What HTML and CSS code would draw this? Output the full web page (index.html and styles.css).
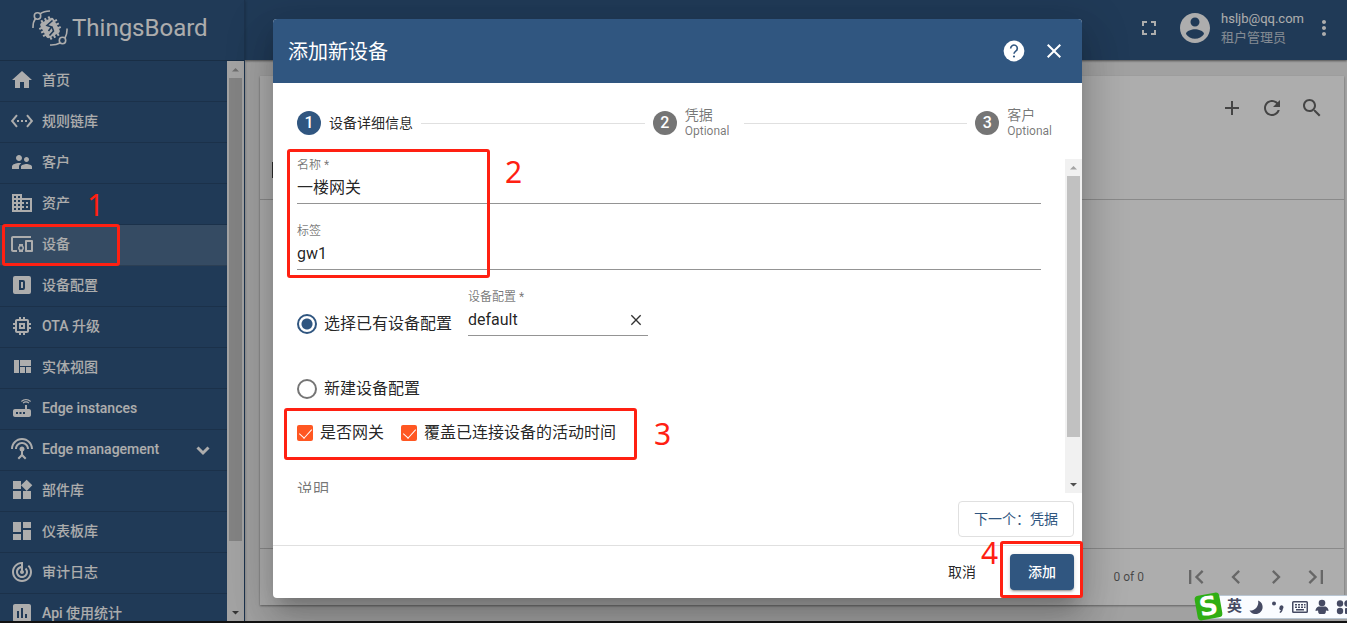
FILE: index.html
```html
<!DOCTYPE html>
<html lang="zh-CN">
<head>
    <meta charset="UTF-8">
    <meta name="viewport" content="width=device-width, initial-scale=1.0">
    <title>ThingsBoard | 设备</title>
    <link rel="stylesheet" href="styles.css">
</head>
<body>
    <div class="app">
        <aside class="sidenav">
            <header class="brand">
                <svg class="brand-logo" viewBox="0 0 36 36" fill="none" stroke="#fff">
                    <g transform="rotate(-28 18 18)">
                        <path fill="#fff" stroke="none" d="M13 9.500h10q2.500 0 2.500 2.500v12q0 2.500-2.500 2.500H13q-2.500 0-2.500-2.500V12q0-2.500 2.500-2.500z"/>
                        <path stroke-width="2" d="M14 10V7M18 10V7M22 10V7M14 26v3M18 26v3M22 26v3M11 14H8M11 18H8M11 22H8M25 14h3M25 18h3M25 22h3"/>
                    </g>
                    <path stroke="#305680" stroke-width="1.600" d="M20.500 10.500l-5.500 5 4.500 1.500-3 4M20 17l1.500 4-4 4.500"/>
                    <circle cx="5.500" cy="6" r="3.200" stroke-width="1.600"/>
                    <path stroke-width="1.600" d="M8 4Q12 1 18 1M3.500 8.500Q.8 12 1 18"/>
                    <circle cx="30.500" cy="30.500" r="3.200" stroke-width="1.600"/>
                    <path stroke-width="1.600" d="M28 33Q24 35.300 18 35M33 28Q35.300 24 35 18.500"/>
                </svg>
                <span class="brand-name">ThingsBoard</span>
            </header>
            <div class="sidenav-body">
                <nav class="menu">
                    <a class="menu-item" href="#"><svg class="icon" viewBox="0 0 24 24"><path d="M10 20v-6h4v6h5v-8h3L12 3 2 12h3v8z"/></svg>首页</a>
                    <a class="menu-item" href="#"><svg class="icon" viewBox="0 0 24 24"><path d="M7.77 6.76L6.23 5.48.82 12l5.41 6.52 1.54-1.28L3.42 12l4.35-5.24zM7 13h2v-2H7v2zm10-2h-2v2h2v-2zm-6 2h2v-2h-2v2zm6.770-7.520l-1.540 1.280L20.580 12l-4.350 5.240 1.540 1.280L23.180 12l-5.410-6.520z"/></svg>规则链库</a>
                    <a class="menu-item" href="#"><svg class="icon" viewBox="0 0 24 24"><path d="M16.5 12c1.38 0 2.49-1.12 2.49-2.5S17.88 7 16.5 7C15.12 7 14 8.12 14 9.5s1.12 2.5 2.5 2.5zM9 11c1.66 0 2.99-1.34 2.99-3S10.66 5 9 5C7.34 5 6 6.34 6 8s1.34 3 3 3zm7.5 3c-1.83 0-5.5.92-5.5 2.75V19h11v-2.25c0-1.83-3.67-2.75-5.5-2.75zM9 13c-2.33 0-7 1.17-7 3.5V19h7v-2.25c0-.85.33-2.34 2.37-3.47C10.5 13.1 9.66 13 9 13z"/></svg>客户</a>
                    <a class="menu-item" href="#"><svg class="icon" viewBox="0 0 24 24"><path d="M12 7V3H2v18h20V7H12zM6 19H4v-2h2v2zm0-4H4v-2h2v2zm0-4H4V9h2v2zm0-4H4V5h2v2zm4 12H8v-2h2v2zm0-4H8v-2h2v2zm0-4H8V9h2v2zm0-4H8V5h2v2zm10 12h-8v-2h2v-2h-2v-2h2v-2h-2V9h8v10zm-2-8h-2v2h2v-2zm0 4h-2v2h2v-2z"/></svg>资产</a>
                    <a class="menu-item active" href="#"><svg class="icon" viewBox="0 0 24 24"><path d="M3 6h18V4H3c-1.1 0-2 .9-2 2v12c0 1.1.9 2 2 2h4v-2H3V6zm10 6H9v1.78c-.61.55-1 1.33-1 2.22s.39 1.67 1 2.22V20h4v-1.78c.61-.55 1-1.34 1-2.22s-.39-1.67-1-2.22V12zm-2 5.5c-.83 0-1.5-.67-1.5-1.5s.67-1.5 1.5-1.5 1.5.67 1.5 1.5-.67 1.5-1.5 1.5zM22 8h-6c-.5 0-1 .5-1 1v10c0 .5.5 1 1 1h6c.5 0 1-.5 1-1V9c0-.5-.5-1-1-1zm-1 10h-4v-8h4v8z"/></svg>设备</a>
                    <a class="menu-item" href="#"><svg class="icon" viewBox="0 0 24 24"><path fill-rule="evenodd" d="M5 3h14a2 2 0 0 1 2 2v14a2 2 0 0 1-2 2H5a2 2 0 0 1-2-2V5a2 2 0 0 1 2-2zM9 7v10h4a2 2 0 0 0 2-2V9a2 2 0 0 0-2-2H9zm2 2h2v6h-2V9z"/></svg>设备配置</a>
                    <a class="menu-item" href="#"><svg class="icon" viewBox="0 0 24 24"><path d="M15 9H9v6h6V9zm-2 4h-2v-2h2v2zm8-2V9h-2V7c0-1.1-.9-2-2-2h-2V3h-2v2h-2V3H9v2H7c-1.1 0-2 .9-2 2v2H3v2h2v2H3v2h2v2c0 1.1.9 2 2 2h2v2h2v-2h2v2h2v-2h2c1.1 0 2-.9 2-2v-2h2v-2h-2v-2h2zm-4 6H7V7h10v10z"/></svg>OTA 升级</a>
                    <a class="menu-item" href="#"><svg class="icon" viewBox="0 0 24 24"><path d="M10 18h5v-6h-5v6zm-6 0h5V5H4v13zm12 0h5v-6h-5v6zM10 5v6h11V5H10z"/></svg>实体视图</a>
                    <a class="menu-item" href="#"><svg class="icon" viewBox="0 0 24 24"><path d="M20.2 5.9l.8-.8C19.6 3.7 17.8 3 16 3s-3.6.7-5 2.1l.8.8C13 4.8 14.5 4.2 16 4.2s3 .6 4.2 1.7zm-.9.8c-.9-.9-2.1-1.4-3.3-1.4s-2.4.5-3.3 1.4l.8.8c.7-.7 1.6-1 2.5-1 .9 0 1.8.3 2.5 1l.8-.8zM19 13h-2V9h-2v4H5c-1.1 0-2 .9-2 2v4c0 1.1.9 2 2 2h14c1.1 0 2-.9 2-2v-4c0-1.1-.9-2-2-2zM8 18H6v-2h2v2zm3.5 0h-2v-2h2v2zm3.5 0h-2v-2h2v2z"/></svg>Edge instances</a>
                    <a class="menu-item" href="#"><svg class="icon" viewBox="0 0 24 24"><path d="M12 5c-3.87 0-7 3.13-7 7h2c0-2.76 2.24-5 5-5s5 2.24 5 5h2c0-3.87-3.13-7-7-7zm1 9.29c.88-.39 1.5-1.26 1.5-2.29 0-1.38-1.12-2.5-2.5-2.5S9.5 10.62 9.5 12c0 1.02.62 1.9 1.5 2.29v3.3L7.59 21 9 22.41l3-3 3 3L16.41 21 13 17.59v-3.3zM12 1C5.93 1 1 5.93 1 12h2c0-4.97 4.03-9 9-9s9 4.03 9 9h2c0-6.07-4.93-11-11-11z"/></svg>Edge management<svg class="menu-toggle" viewBox="0 0 16 16"><path d="M2.500 6.500l5.500 5.500 5.500-5.500" fill="none" stroke="#fff" stroke-width="3"/></svg></a>
                    <a class="menu-item" href="#"><svg class="icon" viewBox="0 0 24 24"><path d="M13 13v8h8v-8h-8zM3 21h8v-8H3v8zM3 3v8h8V3H3zm13.66-1.31L11 7.34 16.66 13l5.66-5.66-5.66-5.65z"/></svg>部件库</a>
                    <a class="menu-item" href="#"><svg class="icon" viewBox="0 0 24 24"><path d="M3 13h8V3H3v10zm0 8h8v-6H3v6zm10 0h8V11h-8v10zm0-18v6h8V3h-8z"/></svg>仪表板库</a>
                    <a class="menu-item" href="#"><svg class="icon" viewBox="0 0 24 24"><path d="M19.07 4.93l-1.41 1.41C19.1 7.79 20 9.79 20 12c0 4.42-3.58 8-8 8s-8-3.58-8-8c0-4.08 3.05-7.44 7-7.93v2.02C8.16 6.57 6 9.03 6 12c0 3.31 2.69 6 6 6s6-2.69 6-6c0-1.66-.67-3.16-1.76-4.24l-1.41 1.41C15.55 9.9 16 10.9 16 12c0 2.21-1.79 4-4 4s-4-1.79-4-4c0-1.86 1.28-3.41 3-3.86v2.14c-.6.35-1 .98-1 1.72 0 1.1.9 2 2 2s2-.9 2-2c0-.74-.4-1.38-1-1.72V2h-1C6.48 2 2 6.48 2 12s4.48 10 10 10 10-4.48 10-10c0-2.76-1.12-5.26-2.93-7.07z"/></svg>审计日志</a>
                    <a class="menu-item" href="#"><svg class="icon" viewBox="0 0 24 24"><path d="M19 3H5c-1.100 0-2 .9-2 2v14c0 1.100.9 2 2 2h14c1.100 0 2-.9 2-2V5c0-1.100-.9-2-2-2zM9 17H7v-7h2v7zm4 0h-2V7h2v10zm4 0h-2v-4h2v4z"/></svg>Api 使用统计</a>
                </nav>
                <div class="scrollbar">
                    <svg class="arrow off" viewBox="0 0 17 17"><path d="M5 10.500h7L8.500 7z"/></svg>
                    <div class="rail"><div class="thumb thumb-menu"></div></div>
                    <svg class="arrow" viewBox="0 0 17 17"><path d="M5 7h7l-3.500 3.500z"/></svg>
                </div>
            </div>
        </aside>

        <main class="main">
            <header class="toolbar">
                <button class="icon-btn" type="button" aria-label="全屏"><svg class="icon" viewBox="0 0 24 24"><path d="M7 14H5v5h5v-2H7v-3zm-2-4h2V7h3V5H5v5zm12 7h-3v2h5v-5h-2v3zM14 5v2h3v3h2V5h-5z"/></svg></button>
                <svg class="avatar" viewBox="0 0 24 24"><path d="M12 2C6.48 2 2 6.48 2 12s4.48 10 10 10 10-4.48 10-10S17.52 2 12 2zm0 3c1.660 0 3 1.340 3 3s-1.340 3-3 3-3-1.340-3-3 1.340-3 3-3zm0 14.200c-2.500 0-4.710-1.280-6-3.220.03-1.990 4-3.080 6-3.080 1.990 0 5.970 1.090 6 3.080-1.290 1.940-3.500 3.220-6 3.220z"/></svg>
                <div class="user">
                    <span class="user-name">hsljb@qq.com</span>
                    <span class="user-role">租户管理员</span>
                </div>
                <button class="icon-btn" type="button" aria-label="更多"><svg class="icon" viewBox="0 0 24 24"><path d="M12 8c1.1 0 2-.9 2-2s-.9-2-2-2-2 .9-2 2 .9 2 2 2zm0 2c-1.1 0-2 .9-2 2s.9 2 2 2 2-.9 2-2-.9-2-2-2zm0 6c-1.1 0-2 .9-2 2s.9 2 2 2 2-.9 2-2-.9-2-2-2z"/></svg></button>
            </header>
            <section class="card">
                <div class="card-tools">
                    <button class="icon-btn" type="button" aria-label="添加设备"><svg class="icon" viewBox="0 0 24 24"><path d="M19 13h-6v6h-2v-6H5v-2h6V5h2v6h6v2z"/></svg></button>
                    <button class="icon-btn" type="button" aria-label="刷新"><svg class="icon" viewBox="0 0 24 24"><path d="M17.65 6.35C16.2 4.9 14.21 4 12 4c-4.42 0-7.99 3.58-7.99 8s3.57 8 7.99 8c3.73 0 6.84-2.55 7.73-6h-2.08c-.82 2.33-3.04 4-5.65 4-3.31 0-6-2.69-6-6s2.69-6 6-6c1.66 0 3.14.69 4.22 1.78L13 11h7V4l-2.35 2.35z"/></svg></button>
                    <button class="icon-btn" type="button" aria-label="搜索"><svg class="icon" viewBox="0 0 24 24"><path d="M15.5 14h-.79l-.28-.27C15.41 12.59 16 11.11 16 9.5 16 5.91 13.09 3 9.5 3S3 5.91 3 9.5 5.91 16 9.5 16c1.61 0 3.09-.59 4.23-1.57l.27.28v.79l5 4.99L20.49 19l-4.99-5zm-6 0C7.01 14 5 11.99 5 9.5S7.01 5 9.5 5 14 7.01 14 9.5 11.99 14 9.5 14z"/></svg></button>
                </div>
                <div class="card-head"><input class="select-all" type="checkbox" aria-label="全选"></div>
                <div class="card-rows"></div>
                <footer class="paginator">
                    <span class="range">0 of 0</span>
                    <button class="icon-btn" type="button" aria-label="首页"><svg class="icon" viewBox="0 0 24 24"><path d="M18.41 16.59L13.82 12l4.590-4.590L17 6l-6 6 6 6zM6 6h2v12H6z"/></svg></button>
                    <button class="icon-btn" type="button" aria-label="上一页"><svg class="icon" viewBox="0 0 24 24"><path d="M15.410 7.410L14 6l-6 6 6 6 1.410-1.410L10.830 12z"/></svg></button>
                    <button class="icon-btn" type="button" aria-label="下一页"><svg class="icon" viewBox="0 0 24 24"><path d="M10 6L8.590 7.410 13.170 12l-4.580 4.590L10 18l6-6z"/></svg></button>
                    <button class="icon-btn" type="button" aria-label="末页"><svg class="icon" viewBox="0 0 24 24"><path d="M5.590 7.410L10.180 12l-4.590 4.590L7 18l6-6-6-6zM16 6h2v12h-2z"/></svg></button>
                </footer>
            </section>
        </main>

        <div class="overlay">
            <form class="dialog" role="dialog" aria-labelledby="dialog-title">
                <header class="dialog-head">
                    <h2 id="dialog-title">添加新设备</h2>
                    <button class="icon-btn" type="button" aria-label="帮助"><svg class="icon" viewBox="0 0 24 24"><circle cx="12" cy="12" r="10.400"/><path d="M8.700 9.500a3.300 3.300 0 1 1 5.100 2.600c-1.200.9-1.800 1.400-1.800 2.700" fill="none" stroke="#305680" stroke-width="1.600"/><circle cx="12" cy="17.500" r="1.100" fill="#305680"/></svg></button>
                    <button class="icon-btn" type="button" aria-label="关闭"><svg class="icon" viewBox="0 0 24 24"><path d="M19 6.41L17.59 5 12 10.59 6.41 5 5 6.41 10.59 12 5 17.59 6.41 19 12 13.41 17.59 19 19 17.59 13.41 12z"/></svg></button>
                </header>

                <div class="steps">
                    <div class="step current"><span class="step-no">1</span><span class="step-label">设备详细信息</span></div>
                    <span class="step-line"></span>
                    <div class="step"><span class="step-no">2</span><span class="step-label">凭据<small>Optional</small></span></div>
                    <span class="step-line"></span>
                    <div class="step"><span class="step-no">3</span><span class="step-label">客户<small>Optional</small></span></div>
                </div>

                <div class="dialog-body">
                    <div class="fields">
                        <div class="field">
                            <label for="name">名称 *</label>
                            <input id="name" type="text" value="一楼网关">
                        </div>
                        <div class="field">
                            <label for="tag">标签</label>
                            <input id="tag" type="text" value="gw1">
                        </div>
                        <div class="profile-row">
                            <label class="choice"><input type="radio" name="profile" checked>选择已有设备配置</label>
                            <div class="field profile">
                                <label for="profile">设备配置 *</label>
                                <div class="field-line">
                                    <input id="profile" type="text" value="default">
                                    <button class="clear" type="button" aria-label="清除"><svg viewBox="0 0 24 24"><path d="M5 5l14 14M19 5L5 19" fill="none" stroke="#333" stroke-width="2"/></svg></button>
                                </div>
                            </div>
                        </div>
                        <label class="choice new-profile"><input type="radio" name="profile">新建设备配置</label>
                        <div class="checks">
                            <label class="choice"><input type="checkbox" checked>是否网关</label>
                            <label class="choice"><input type="checkbox" checked>覆盖已连接设备的活动时间</label>
                        </div>
                        <textarea class="description" placeholder="说明" aria-label="说明"></textarea>
                    </div>
                    <div class="scrollbar">
                        <svg class="arrow off" viewBox="0 0 17 17"><path d="M5 10.500h7L8.500 7z"/></svg>
                        <div class="rail"><div class="thumb thumb-form"></div></div>
                        <svg class="arrow" viewBox="0 0 17 17"><path d="M5 7h7l-3.500 3.500z"/></svg>
                    </div>
                </div>

                <div class="step-actions"><button class="btn outlined" type="button">下一个：凭据</button></div>
                <footer class="dialog-foot">
                    <button class="btn" type="button">取消</button>
                    <button class="btn primary" type="submit">添加</button>
                </footer>
            </form>
        </div>
    </div>
    <div class="screen-edge"></div>

    <div class="mark mark-1"></div><span class="mark-no no-1">1</span>
    <div class="mark mark-2"></div><span class="mark-no no-2">2</span>
    <div class="mark mark-3"></div><span class="mark-no no-3">3</span>
    <div class="mark mark-4"></div><span class="mark-no no-4">4</span>

    <div class="ime">
        <span class="ime-logo">S</span>
        <span class="ime-lang">英</span>
        <svg viewBox="0 0 16 16"><path d="M10 1.500A7 7 0 1 1 1.500 11.500 8 8 0 0 0 10 1.500z"/></svg>
        <svg viewBox="0 0 16 16"><circle cx="4" cy="4.500" r="2"/><path d="M9.500 8.500a2 2 0 1 1 3.300 1.400c0 2-1.200 3.300-2.800 4.100l-.5-.9c.8-.6 1.300-1.200 1.400-2a1.700 1.700 0 0 1-1.400-2.600z"/></svg>
        <svg viewBox="0 0 16 16"><path fill-rule="evenodd" d="M1.500 2h13q1.500 0 1.500 1.500v9q0 1.500-1.500 1.500h-13Q0 14 0 12.500v-9Q0 2 1.500 2zm0 1.500v9h13v-9z"/><path d="M3 5h2v1.500H3zM6 5h2v1.500H6zM9 5h2v1.500H9zM12 5h1.500v1.500H12zM3 7.500h2V9H3zM6 7.500h2V9H6zM9 7.500h2V9H9zM12 7.500h1.500V9H12zM4 10h8v1.500H4z"/></svg>
        <svg viewBox="0 0 16 16"><circle cx="8" cy="4" r="3.300"/><path d="M4.500 7.500h7q3 1.300 3 4.500l-2.500-.5q0 3-1.500 3.500h-5Q4 14.500 4 11.500L1.500 12q0-3.200 3-4.500z"/></svg>
        <svg viewBox="0 0 16 16"><circle cx="4" cy="4.500" r="3.200"/><circle cx="11.500" cy="4.500" r="3.200"/><circle cx="4" cy="12" r="3.200"/><rect x="9" y="9" width="6" height="6" rx="1"/></svg>
    </div>
</body>
</html>
```

FILE: styles.css
```css
* {
    box-sizing: border-box;
}
body {
    margin: 0;
    height: 100vh;
    display: flex;
    flex-direction: column;
    overflow: hidden;
    position: relative;
    font-family: Roboto, "Noto Sans CJK SC", sans-serif;
    font-size: 14px;
    color: rgba(0, 0, 0, 0.87);
}
button, input, textarea {
    font: inherit;
    color: inherit;
    margin: 0;
    padding: 0;
    border: 0;
    background: none;
}
a {
    color: inherit;
    text-decoration: none;
}
.icon {
    width: 24px;
    height: 24px;
    flex: none;
    display: block;
    fill: currentColor;
}
.icon-btn {
    width: 40px;
    height: 40px;
    display: flex;
    align-items: center;
    justify-content: center;
    flex: none;
}
.app {
    flex: 1;
    min-height: 0;
    display: flex;
    position: relative;
    overflow: hidden;
}
.screen-edge {
    height: 2px;
    background: #111;
}

/* side menu */
.sidenav {
    width: 245px;
    flex: none;
    display: flex;
    flex-direction: column;
    background: #305680;
    color: #fff;
    border-right: 1px solid rgba(0, 0, 0, 0.12);
    z-index: 1;
    box-shadow: 0 1px 3px rgba(0, 0, 0, 0.3);
}
.brand {
    height: 61px;
    flex: none;
    display: flex;
    align-items: center;
    gap: 4px;
    padding: 0 0 5px 32px;
    border-bottom: 1px solid rgba(0, 0, 0, 0.2);
}
.brand-logo {
    width: 36px;
    height: 36px;
}
.brand-name {
    font-size: 24px;
    line-height: 36px;
}
.sidenav-body {
    flex: 1;
    min-height: 0;
    display: flex;
}
.menu {
    flex: 1;
    overflow: hidden;
}
.menu-item {
    height: 41px;
    display: flex;
    align-items: center;
    gap: 8px;
    padding: 0 16px 2px 10px;
    border-bottom: 1px solid rgba(0, 0, 0, 0.15);
    font-weight: 500;
    line-height: 20px;
}
.menu-item.active {
    background: rgba(255, 255, 255, 0.15);
}
.menu-toggle {
    width: 16px;
    height: 16px;
    margin-left: auto;
}

/* scrollbars */
.scrollbar {
    width: 17px;
    flex: none;
    display: flex;
    flex-direction: column;
    background: #f1f1f1;
}
.rail {
    flex: 1;
    padding: 0 2px;
}
.thumb {
    background: #c1c1c1;
}
.thumb-menu {
    height: 88%;
}
.thumb-form {
    height: 87%;
}
.arrow {
    width: 17px;
    height: 17px;
    fill: #505050;
}
.arrow.off {
    fill: #a3a3a3;
}

/* page behind the dialog */
.main {
    flex: 1;
    min-width: 0;
    display: flex;
    flex-direction: column;
    background: #eee;
}
.toolbar {
    height: 60px;
    flex: none;
    display: flex;
    align-items: center;
    justify-content: flex-end;
    padding: 0 3px 4px 0;
    background: #305680;
    color: #fff;
    box-shadow: 0 1px 2px rgba(0, 0, 0, 0.5);
}
.avatar {
    width: 36px;
    height: 36px;
    margin: 0 8px;
    fill: currentColor;
}
.user {
    display: flex;
    flex-direction: column;
    font-size: 13px;
    line-height: 19px;
}
.user-role {
    opacity: 0.7;
}
.card {
    flex: 1;
    min-height: 0;
    display: flex;
    flex-direction: column;
    margin: 16px 3px 16px 15px;
    background: #fff;
    box-shadow: 0 1px 2px rgba(0, 0, 0, 0.4);
}
.card-tools {
    height: 64px;
    display: flex;
    align-items: center;
    justify-content: flex-end;
    padding-right: 12px;
    color: rgba(0, 0, 0, 0.6);
}
.card-head {
    height: 60px;
    padding: 22px 12px;
    border-bottom: 1px solid rgba(0, 0, 0, 0.2);
}
.select-all {
    appearance: none;
    display: block;
    width: 16px;
    height: 16px;
    border: 2px solid #444;
}
.card-rows {
    flex: 1;
}
.paginator {
    height: 57px;
    display: flex;
    align-items: center;
    justify-content: flex-end;
    padding-right: 8px;
    border-top: 1px solid rgba(0, 0, 0, 0.2);
    color: rgba(0, 0, 0, 0.4);
}
.paginator .icon {
    width: 28px;
    height: 28px;
}
.range {
    margin-right: 32px;
    font-size: 12px;
    color: rgba(0, 0, 0, 0.6);
}

/* dialog */
.overlay {
    position: absolute;
    inset: 0;
    z-index: 2;
    display: flex;
    align-items: flex-start;
    justify-content: center;
    padding: 19px 0 23px 8px;
    background: rgba(0, 0, 0, 0.32);
}
.dialog {
    width: 809px;
    max-width: 80%;
    height: 100%;
    display: flex;
    flex-direction: column;
    background: #fff;
    border-radius: 4px;
    overflow: hidden;
    box-shadow: 0 11px 15px -7px rgba(0, 0, 0, 0.2), 0 24px 38px 3px rgba(0, 0, 0, 0.14), 0 9px 46px 8px rgba(0, 0, 0, 0.12);
}
.dialog-head {
    height: 64px;
    flex: none;
    display: flex;
    align-items: center;
    padding: 0 8px 0 15px;
    background: #305680;
    color: #fff;
}
.dialog-head h2 {
    flex: 1;
    margin: 0;
    padding-bottom: 2px;
    font-size: 20px;
    font-weight: 400;
}
.steps {
    height: 76px;
    flex: none;
    display: flex;
    align-items: center;
    gap: 8px;
    padding: 4px 30px 0 24px;
}
.step {
    display: flex;
    align-items: center;
    gap: 8px;
    color: rgba(0, 0, 0, 0.54);
}
.step.current {
    color: rgba(0, 0, 0, 0.87);
}
.step-no {
    width: 24px;
    height: 24px;
    border-radius: 50%;
    background: #757575;
    color: #fff;
    font-size: 16px;
    font-weight: 500;
    line-height: 24px;
    text-align: center;
}
.current .step-no {
    background: #305680;
}
.step-label {
    line-height: 16px;
}
.step-label small {
    display: block;
    font-size: 12px;
}
.step-line {
    flex: 1;
    height: 1px;
    background: #e0e0e0;
}
.step-line + .step {
    margin-right: 6px;
}
.step-line + .step:last-child {
    margin-right: 0;
}
.dialog-body {
    flex: 1;
    min-height: 0;
    display: flex;
}
.fields {
    flex: 1;
    overflow: hidden;
    padding: 0 24px;
    font-size: 16px;
}
.field {
    display: flex;
    flex-direction: column;
    gap: 5px;
    padding-bottom: 3px;
    margin-bottom: 21px;
    border-bottom: 1px solid #949494;
}
.field label {
    font-size: 12px;
    line-height: 12px;
    color: rgba(0, 0, 0, 0.54);
}
.field input {
    width: 100%;
    height: 24px;
    line-height: 24px;
}
.profile-row {
    display: flex;
    align-items: flex-end;
    gap: 16px;
}
.profile {
    width: 180px;
    margin: 0;
}
.field-line {
    display: flex;
    align-items: center;
}
.clear {
    width: 24px;
    height: 24px;
    display: flex;
    align-items: center;
    justify-content: center;
    flex: none;
}
.clear svg {
    width: 16px;
    height: 16px;
}
.choice {
    display: flex;
    align-items: center;
    gap: 7px;
    line-height: 24px;
}
.choice input {
    appearance: none;
    flex: none;
    width: 20px;
    height: 20px;
    border: 2px solid #757575;
    border-radius: 50%;
}
.choice input[type="radio"]:checked {
    border-color: #305680;
    background: radial-gradient(circle, #305680 5px, #fff 6px);
}
.choice input[type="checkbox"] {
    width: 16px;
    height: 16px;
    border: 0;
    border-radius: 2px;
    background: #ff5722;
    display: flex;
    align-items: flex-start;
    justify-content: center;
}
.choice input[type="checkbox"]::before {
    content: "";
    width: 6px;
    height: 11px;
    margin-top: 1px;
    border: solid #fff;
    border-width: 0 1px 1px 0;
    transform: rotate(42deg);
}
.new-profile {
    margin-top: 41px;
}
.checks {
    display: flex;
    gap: 17px;
    margin-top: 20px;
}
.description {
    display: block;
    width: 100%;
    height: 60px;
    margin-top: 33px;
    resize: none;
    line-height: 24px;
}
.description::placeholder {
    color: rgba(0, 0, 0, 0.54);
}
.step-actions {
    flex: none;
    display: flex;
    justify-content: flex-end;
    padding: 8px;
}
.dialog-foot {
    flex: none;
    display: flex;
    justify-content: flex-end;
    gap: 16px;
    padding: 8px;
    border-top: 1px solid #e0e0e0;
}
.btn {
    min-width: 64px;
    height: 36px;
    padding: 0 16px 3px;
    border-radius: 4px;
    white-space: nowrap;
}
.btn.outlined {
    padding: 0 15px 3px;
    border: 1px solid #e0e0e0;
    color: #305680;
}
.btn.primary {
    background: #305680;
    color: #fff;
    font-weight: 500;
    box-shadow: 0 3px 1px -2px rgba(0, 0, 0, 0.2), 0 2px 2px rgba(0, 0, 0, 0.14), 0 1px 5px rgba(0, 0, 0, 0.12);
}

/* red marks drawn over the screen */
.mark {
    position: absolute;
    z-index: 3;
    border: 3px solid #ff2012;
    border-radius: 3px;
    pointer-events: none;
}
.mark-no {
    position: absolute;
    z-index: 3;
    font-family: "Noto Sans", sans-serif;
    font-size: 30px;
    line-height: 30px;
    color: #ff2012;
}
.mark-1 { left: 2px; top: 224px; width: 118px; height: 42px; }
.mark-2 { left: 287px; top: 149px; width: 203px; height: 129px; }
.mark-3 { left: 284px; top: 408px; width: 353px; height: 52px; }
.mark-4 { left: 1000px; top: 541px; width: 83px; height: 57px; }
.no-1 { left: 87px; top: 190px; }
.no-2 { left: 505px; top: 157px; }
.no-3 { left: 654px; top: 419px; }
.no-4 { left: 981px; top: 538px; }

/* input method bar */
.ime {
    position: absolute;
    right: 0;
    bottom: 4px;
    z-index: 3;
    width: 142px;
    height: 24px;
    display: flex;
    align-items: center;
    gap: 6px;
    padding-left: 22px;
    background: #fafcff;
    border: solid #b9c6d3;
    border-width: 1px 0;
    color: #454a63;
}
.ime svg {
    width: 16px;
    height: 16px;
    flex: none;
    fill: currentColor;
}
.ime-logo {
    position: absolute;
    left: -9px;
    top: -2px;
    width: 25px;
    height: 25px;
    border-radius: 4px;
    background: #2fae14;
    color: #fff;
    font: bold 26px/25px "DejaVu Sans", sans-serif;
    text-align: center;
    transform: rotate(-10deg);
}
.ime-lang {
    padding-bottom: 2px;
    font-size: 15px;
    font-weight: 700;
    line-height: 20px;
}
```
